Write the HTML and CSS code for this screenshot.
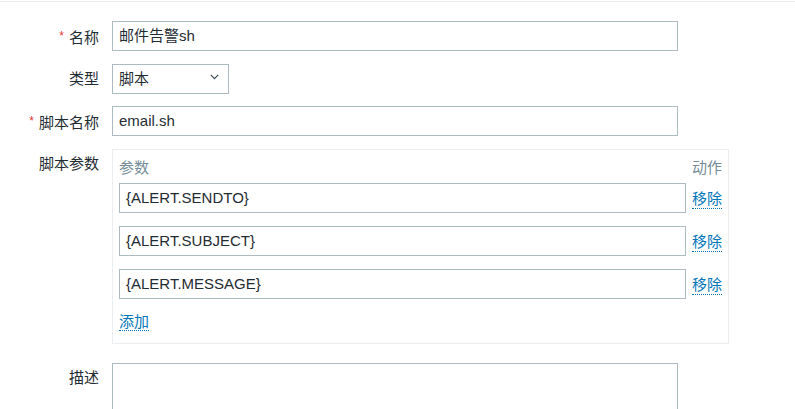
FILE: index.html
```html
<!DOCTYPE html>
<html lang="zh">
<head>
<meta charset="utf-8">
<link rel="stylesheet" href="styles.css">
</head>
<body>
<div class="topline"></div>
<form class="form">
  <div class="row">
    <label class="label"><span class="ast">*</span>名称</label>
    <div class="field"><div class="input wide">邮件告警sh</div></div>
  </div>
  <div class="row">
    <label class="label">类型</label>
    <div class="field">
      <div class="input select"><span>脚本</span>
        <svg class="chev" width="9" height="6" viewBox="0 0 9 6"><path d="M0.8 0.8 L4.5 4.6 L8.2 0.8" fill="none" stroke="#3b4a52" stroke-width="1.2"/></svg>
      </div>
    </div>
  </div>
  <div class="row">
    <label class="label"><span class="ast">*</span>脚本名称</label>
    <div class="field"><div class="input wide">email.sh</div></div>
  </div>
  <div class="row box-row">
    <label class="label">脚本参数</label>
    <div class="field">
      <div class="params">
        <div class="params-head"><span>参数</span><span>动作</span></div>
        <div class="param-row"><div class="input grow">{ALERT.SENDTO}</div><a class="link">移除</a></div>
        <div class="param-row"><div class="input grow">{ALERT.SUBJECT}</div><a class="link">移除</a></div>
        <div class="param-row"><div class="input grow">{ALERT.MESSAGE}</div><a class="link">移除</a></div>
        <div class="add-row"><a class="link">添加</a></div>
      </div>
    </div>
  </div>
  <div class="row">
    <label class="label">描述</label>
    <div class="field"><div class="input wide textarea"></div></div>
  </div>
</form>
</body>
</html>
```
FILE: styles.css
```css
html, body {
  margin: 0;
  padding: 0;
  background: #ffffff;
}
body {
  font-family: "Liberation Sans", "Noto Sans CJK SC", sans-serif;
  font-size: 15px;
  color: #1f2c33;
  overflow: hidden;
}
.topline {
  margin-top: 1px;
  height: 1px;
  background: #ebebeb;
}
.form {
  padding-top: 19px;
  display: flex;
  flex-direction: column;
  gap: 12.5px;
}
.row {
  display: flex;
  align-items: flex-start;
  gap: 13px;
}
.box-row {
  margin-bottom: 6.5px;
}
.label {
  width: 99px;
  flex: none;
  text-align: right;
  line-height: 30px;
  height: 30px;
}
.ast {
  color: #e33734;
  font-size: 12px;
  vertical-align: 3px;
  margin-right: 5px;
}
.field {
  flex: none;
}
.input {
  box-sizing: border-box;
  height: 30px;
  line-height: 28px;
  border: 1px solid #acbbc2;
  padding: 0 6px;
  background: #fff;
  white-space: nowrap;
}
.wide {
  width: 566px;
}
.select {
  width: 117px;
  display: flex;
  align-items: center;
  justify-content: space-between;
  padding-right: 9px;
}
.chev {
  margin-top: -3px;
}
.textarea {
  height: 80px;
}
.params {
  box-sizing: border-box;
  width: 617px;
  border: 1px solid #ebeef0;
  padding: 0 6px 11px;
}
.params-head {
  height: 33px;
  display: flex;
  align-items: center;
  justify-content: space-between;
  color: #768d99;
}
.param-row {
  display: flex;
  align-items: center;
  gap: 6px;
  margin-bottom: 13px;
}
.grow {
  flex: 1;
}
.link {
  color: #0275b8;
  border-bottom: 1px dotted #0275b8;
  cursor: pointer;
}
.add-row {
  height: 20px;
  line-height: 20px;
}
```
